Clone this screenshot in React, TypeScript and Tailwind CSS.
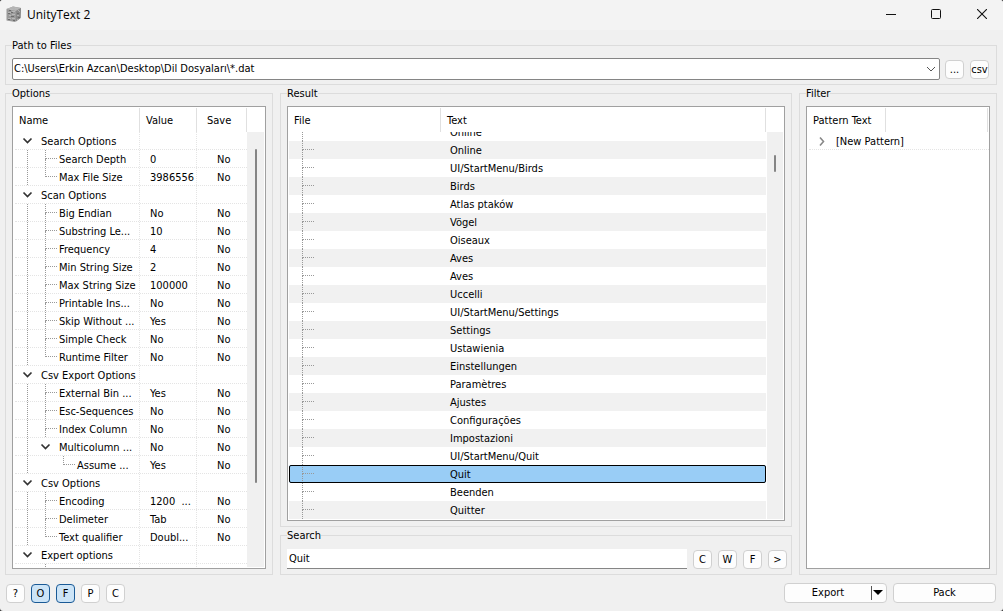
import { useState } from 'react';
import type { ReactNode } from 'react';

type Option = {
  name: string;
  level: number;
  value?: string;
  save?: string;
  open?: boolean;
  last?: boolean;
};

const options: Option[] = [
  { name: 'Search Options', level: 0, open: true },
  { name: 'Search Depth', level: 1, value: '0', save: 'No' },
  { name: 'Max File Size', level: 1, value: '3986556', save: 'No', last: true },
  { name: 'Scan Options', level: 0, open: true },
  { name: 'Big Endian', level: 1, value: 'No', save: 'No' },
  { name: 'Substring Le...', level: 1, value: '10', save: 'No' },
  { name: 'Frequency', level: 1, value: '4', save: 'No' },
  { name: 'Min String Size', level: 1, value: '2', save: 'No' },
  { name: 'Max String Size', level: 1, value: '100000', save: 'No' },
  { name: 'Printable Ins...', level: 1, value: 'No', save: 'No' },
  { name: 'Skip Without ...', level: 1, value: 'Yes', save: 'No' },
  { name: 'Simple Check', level: 1, value: 'No', save: 'No' },
  { name: 'Runtime Filter', level: 1, value: 'No', save: 'No', last: true },
  { name: 'Csv Export Options', level: 0, open: true },
  { name: 'External Bin ...', level: 1, value: 'Yes', save: 'No' },
  { name: 'Esc-Sequences', level: 1, value: 'No', save: 'No' },
  { name: 'Index Column', level: 1, value: 'No', save: 'No' },
  { name: 'Multicolumn ...', level: 1, value: 'No', save: 'No', open: true, last: true },
  { name: 'Assume ...', level: 2, value: 'Yes', save: 'No', last: true },
  { name: 'Csv Options', level: 0, open: true },
  { name: 'Encoding', level: 1, value: '1200  ...', save: 'No' },
  { name: 'Delimeter', level: 1, value: 'Tab', save: 'No' },
  { name: 'Text qualifier', level: 1, value: 'Doubl...', save: 'No', last: true },
  { name: 'Expert options', level: 0, open: true },
  { name: '', level: 1 },
];

const results = [
  'Online',
  'Online',
  'UI/StartMenu/Birds',
  'Birds',
  'Atlas ptaków',
  'Vögel',
  'Oiseaux',
  'Aves',
  'Aves',
  'Uccelli',
  'UI/StartMenu/Settings',
  'Settings',
  'Ustawienia',
  'Einstellungen',
  'Paramètres',
  'Ajustes',
  'Configurações',
  'Impostazioni',
  'UI/StartMenu/Quit',
  'Quit',
  'Beenden',
  'Quitter',
];

function Group({ title, className = '', children }: { title: string; className?: string; children: ReactNode }) {
  return (
    <fieldset className={`flex min-h-0 min-w-0 flex-col border border-[#dcdcdc] px-1.5 pt-[5px] ${className}`}>
      <legend className="h-4 leading-[18px]">{title}</legend>
      {children}
    </fieldset>
  );
}

function SmallButton({ children, active, onClick }: { children: ReactNode; active?: boolean; onClick?: () => void }) {
  return (
    <button
      type="button"
      onClick={onClick}
      className={`flex size-[19px] shrink-0 items-center justify-center overflow-hidden rounded border pt-px leading-4 ${
        active ? 'border-[#1a5a96] bg-[#cce4f7]' : 'border-[#d0d0d0] bg-[#fdfdfd]'
      }`}
    >
      {children}
    </button>
  );
}

// Down arrow used for open tree nodes
function Chevron() {
  return (
    <svg viewBox="0 0 18 18" className="size-[18px] shrink-0" fill="none" stroke="#333" strokeWidth="1.7">
      <path d="M4.5 6.5 L8.5 10.5 L12.5 6.5" />
    </svg>
  );
}

// Dotted line from the parent node to this row
function Elbow({ last }: { last?: boolean }) {
  return (
    <span className="flex w-[18px] shrink-0 flex-col self-stretch pl-2">
      <span className="mr-[-2px] h-[9px] w-3 border-b border-l border-dotted border-[#999]" />
      {!last && <span className="w-px flex-1 border-l border-dotted border-[#999]" />}
    </span>
  );
}

function TreeGuides({ option }: { option: Option }) {
  const { level, open, last } = option;
  return (
    <>
      {level > 0 && (
        <span className="flex w-[18px] shrink-0 self-stretch pl-2">
          {option.name && <span className="w-px border-l border-dotted border-[#999]" />}
        </span>
      )}
      {level > 1 && <span className="w-[18px] shrink-0" />}
      {open ? <Chevron /> : <Elbow last={last} />}
    </>
  );
}

function OptionsTable() {
  return (
    <div className="flex min-h-0 flex-1 overflow-hidden border border-[#a0a0a0] bg-white pb-px">
      <table className="flex min-w-0 flex-1 flex-col">
        <thead className="block pt-px">
          <tr className="flex h-6 items-stretch text-left leading-[26px]">
            <th className="min-w-0 flex-1 border-r border-[#e0e0e0] pl-1.5 font-normal">Name</th>
            <th className="w-[57px] border-r border-[#e0e0e0] pl-1.5 font-normal">Value</th>
            <th className="w-[50px] border-r border-[#e0e0e0] pl-2.5 font-normal">Save</th>
          </tr>
        </thead>
        <tbody className="block min-h-0 flex-1 overflow-hidden pl-0.5">
          {options.map((option, i) => (
            <tr key={i} className="flex h-[18px] border-b border-dotted border-[#e4e4e4] leading-5 whitespace-pre">
              <td className="flex min-w-0 flex-1 border-r border-dotted border-[#e4e4e4] pl-1">
                <TreeGuides option={option} />
                <span className="pl-1">{option.name}</span>
              </td>
              <td className="w-[57px] border-r border-dotted border-[#e4e4e4] pl-2.5">{option.value}</td>
              <td className="w-[50px] pl-5">{option.save}</td>
            </tr>
          ))}
        </tbody>
      </table>
      <div className="flex w-[18px] flex-col pt-[25px] pr-px">
        <div className="flex min-h-0 flex-1 justify-center bg-[#f0f0f0] pt-[17px]">
          <div className="h-4/5 w-0.5 rounded-full bg-[#858585]" />
        </div>
      </div>
    </div>
  );
}

function ResultTable() {
  const [selected, setSelected] = useState(19);

  return (
    <div className="flex min-h-0 flex-1 overflow-hidden border border-[#a0a0a0] bg-white pb-px">
      <table className="flex min-w-0 flex-1 flex-col">
        <thead className="block pt-px">
          <tr className="flex h-6 text-left leading-[26px]">
            <th className="w-[153px] border-r border-[#e0e0e0] pl-1.5 font-normal">File</th>
            <th className="flex-1 border-r border-[#e0e0e0] pl-1.5 font-normal">Text</th>
          </tr>
        </thead>
        <tbody className="flex min-h-0 flex-1 flex-col justify-end overflow-hidden pl-px">
          {results.map((text, i) => (
            <tr
              key={i}
              onClick={() => setSelected(i)}
              className={`flex h-[18px] shrink-0 leading-5 ${
                i === selected
                  ? 'rounded-xs bg-[#99cdf6] outline outline-offset-[-1px] outline-black'
                  : i % 2 ? 'bg-[#f1f1f1]' : 'bg-white'
              }`}
            >
              <td className="flex w-[152px] pl-[5px]">
                <Elbow />
              </td>
              <td className="flex-1 pl-[9px]">{text}</td>
            </tr>
          ))}
        </tbody>
      </table>
      <div className="flex w-[18px] flex-col pt-[25px] pr-px pl-px">
        <div className="flex flex-1 justify-center bg-[#f0f0f0] pt-[23px]">
          <div className="h-[17px] w-0.5 rounded-full bg-[#858585]" />
        </div>
      </div>
    </div>
  );
}

function FilterTable() {
  return (
    <div className="flex min-h-0 flex-1 border border-[#a0a0a0] bg-white">
      <table className="block flex-1">
        <thead className="block pt-px">
          <tr className="flex h-6 text-left leading-[26px]">
            <th className="w-[79px] border-r border-[#e0e0e0] pl-1.5 font-normal whitespace-nowrap">Pattern Text</th>
            <th className="mr-px flex-1 border-r border-[#e0e0e0]" aria-label="Options" />
          </tr>
        </thead>
        <tbody className="block pl-0.5">
          <tr className="flex h-[18px] border-b border-dotted border-[#e4e4e4] leading-5">
            <td className="flex pl-1">
              <svg viewBox="0 0 18 18" className="size-[18px]" fill="none" stroke="#888" strokeWidth="1.6">
                <path d="M7 5.5 L10.5 9.5 L7 13.5" />
              </svg>
              <span className="pl-[5px]">[New Pattern]</span>
            </td>
          </tr>
        </tbody>
      </table>
    </div>
  );
}

function TitleBar() {
  return (
    <header className="flex h-[30px] shrink-0 items-center bg-[#f3f3f3] pb-0.5 pl-1.5">
      <svg viewBox="0 0 16 16" className="size-4">
        <path d="M0.5 3 L7 0.5 L15 2 L14.5 12 L9 16 L0.5 14.5 Z" fill="#9a9a9a" />
        <path d="M0.5 3 L7 0.5 L15 2 L10 5 Z" fill="#b4b4b4" />
        <path d="M10 5 L15 2 L14.5 12 L10 15.5 Z" fill="#888" />
        <path d="M2 6.5h3M6 5.5h3M3 9.5h2M6 8.5h3M2 12.5h3M6 12.5h3M4 3.5h3M9 2.5h3" stroke="#b8b8b8" />
        <path d="M2 7.5h2M5 6.5h2M5 10.5h3M2 13.5h2M7 14.5h2M11 7.5h2M12 11.5h2M3 4.5h2" stroke="#6c6c6c" />
        <path d="M11 9.5h2M13 5.5h1M11 13.5h1M12 4.5h1" stroke="#b0b0b0" />
      </svg>
      <h1 className="flex-1 pt-px pl-[5px] font-['Open_Sans',sans-serif] text-xs">UnityText 2</h1>
      <button type="button" aria-label="Minimize" className="flex h-full w-10 items-center justify-center">
        <svg viewBox="0 0 10 10" className="size-2.5" stroke="#111">
          <path d="M0 5.5h10" />
        </svg>
      </button>
      <button type="button" aria-label="Maximize" className="flex h-full w-[50px] items-center justify-center">
        <svg viewBox="0 0 10 10" className="size-2.5" fill="none" stroke="#111">
          <rect x="0.5" y="0.5" width="9" height="9" rx="1" />
        </svg>
      </button>
      <button type="button" aria-label="Close" className="flex h-full w-[42px] items-center justify-center">
        <svg viewBox="0 0 10 10" className="size-2.5" stroke="#111" strokeWidth="1.1">
          <path d="M0 0 L10 10 M10 0 L0 10" />
        </svg>
      </button>
    </header>
  );
}

export default function App() {
  const [search, setSearch] = useState('Quit');
  const [showOptions, setShowOptions] = useState(true);
  const [showFilter, setShowFilter] = useState(true);

  return (
    <div className="h-screen bg-[#333]">
      <div className="flex h-full flex-col overflow-hidden rounded-[3px] bg-[#f0f0f0] font-['DejaVu_Sans_Condensed','Noto_Sans',sans-serif] text-[11px] text-black">
        <TitleBar />

        <main className="flex min-h-0 flex-1 flex-col pt-[7px] pr-1.5 pl-[5px]">
          {/* Path */}
          <Group title="Path to Files" className="shrink-0 pr-[7px] pb-1">
            <div className="flex items-center gap-1.5">
              <select
                aria-label="Path to Files"
                className="h-[22px] min-w-0 flex-1 appearance-none rounded-xs border border-[#858585] bg-white px-px"
              >
                <option>C:\Users\Erkin Azcan\Desktop\Dil Dosyaları\*.dat</option>
              </select>
              <svg viewBox="0 0 10 10" className="pointer-events-none -ml-5 mr-[3px] size-2.5" fill="none" stroke="#555">
                <path d="M1 3 L5 7 L9 3" />
              </svg>
              <SmallButton>...</SmallButton>
              <SmallButton>csv</SmallButton>
            </div>
          </Group>

          <div className="flex min-h-0 flex-1 gap-[7px]">
            {showOptions && (
              <Group title="Options" className="w-[268px] shrink-0 pb-[5px]">
                <OptionsTable />
              </Group>
            )}

            <div className="flex min-w-0 flex-1 flex-col">
              <Group title="Result" className="flex-1 pb-[5px]">
                <ResultTable />
              </Group>
              <Group title="Search" className="shrink-0 pr-1 pb-[5px]">
                <div className="mt-px flex items-center gap-1.5">
                  <input
                    type="text"
                    aria-label="Search"
                    value={search}
                    onChange={(e) => setSearch(e.target.value)}
                    className="h-5 min-w-0 flex-1 border-b border-[#858585] bg-white px-0.5 outline-none"
                  />
                  <SmallButton>C</SmallButton>
                  <SmallButton>W</SmallButton>
                  <SmallButton>F</SmallButton>
                  <SmallButton>&gt;</SmallButton>
                </div>
              </Group>
            </div>

            {showFilter && (
              <Group title="Filter" className="w-[198px] shrink-0 pb-[5px]">
                <FilterTable />
              </Group>
            )}
          </div>
        </main>

        {/* Bottom bar */}
        <footer className="flex shrink-0 items-center gap-1.5 py-2 pr-[7px] pl-1.5">
          <SmallButton>?</SmallButton>
          <SmallButton active={showOptions} onClick={() => setShowOptions(!showOptions)}>O</SmallButton>
          <SmallButton active={showFilter} onClick={() => setShowFilter(!showFilter)}>F</SmallButton>
          <SmallButton>P</SmallButton>
          <SmallButton>C</SmallButton>
          <div className="flex-1" />
          <div className="flex h-5 w-[103px] items-center rounded border border-[#d0d0d0] bg-[#fdfdfd]">
            <button type="button" className="h-full flex-1 pt-px">Export</button>
            <button type="button" aria-label="Export menu" className="flex h-[14px] w-[15px] items-center border-l border-[#555] pl-px">
              <svg viewBox="0 0 10 6" className="h-1.5 w-2.5">
                <path d="M0 0h10L5 5z" fill="#000" />
              </svg>
            </button>
          </div>
          <button type="button" className="h-5 w-[103px] rounded border border-[#d0d0d0] bg-[#fdfdfd] pt-px">Pack</button>
        </footer>
      </div>
    </div>
  );
}
